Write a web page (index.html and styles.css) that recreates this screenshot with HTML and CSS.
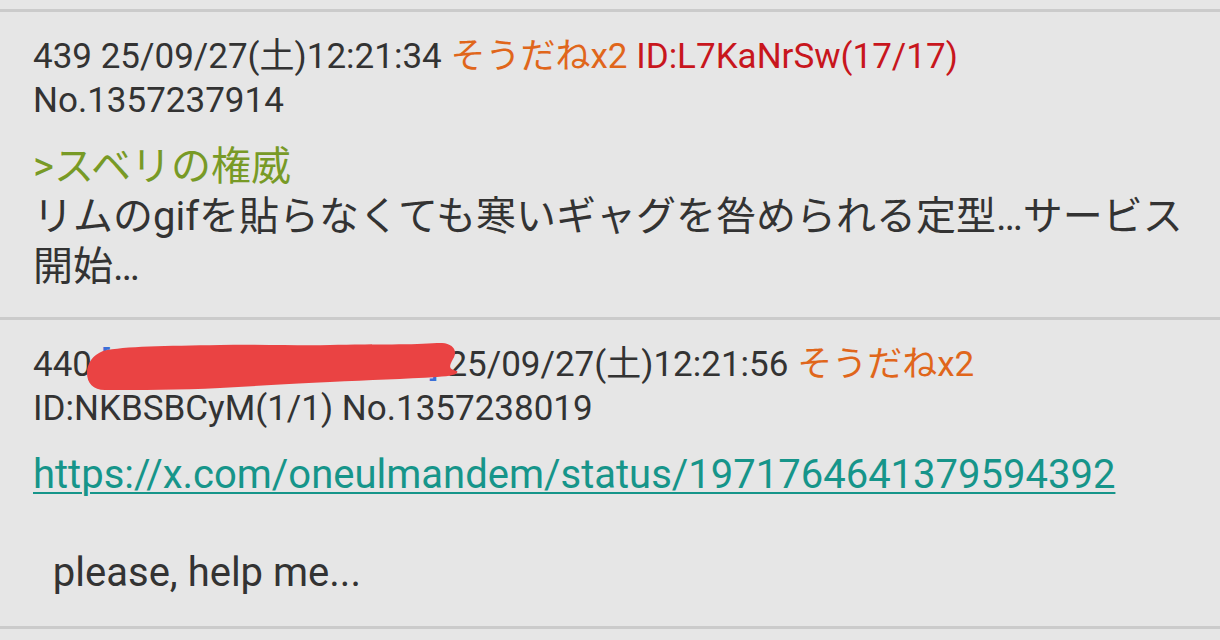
FILE: index.html
```html
<!DOCTYPE html>
<html lang="ja">
<head>
<meta charset="utf-8">
<title>スレッド</title>
<link rel="stylesheet" href="styles.css">
</head>
<body>
<div class="thread">
  <article class="post">
    <div class="head">439 25/09/27(土)12:21:34 <span class="sodane">そうだねx2</span> <span class="uid">ID:L7KaNrSw(17/17)</span> No.1357237914</div>
    <div class="body"><span class="quote">&gt;スベリの権威</span><br>リムのgifを貼らなくても寒いギャグを咎められる定型…サービス開始…</div>
  </article>
  <article class="post">
    <div class="head">440 <span class="name"><span>[</span><span>]</span></span> 25/09/27(土)12:21:56 <span class="sodane">そうだねx2</span> ID:NKBSBCyM(1/1) No.1357238019</div>
    <div class="body">
      <a class="link" href="#">https://x.com/oneulmandem/status/1971764641379594392</a>
      <p class="msg">&nbsp;&nbsp;please, help me...</p>
    </div>
    <svg class="scribble" width="374" height="50" viewBox="0 0 374 50" aria-hidden="true">
      <path d="M2 30 C2 20 8 12 18 8 C40 3 80 3 135 2 C180 1 215 3 245 2 C290 1 330 2 352 0 C366 -1 374 6 368 16 C365 22 362 26 372 28 C374 31 368 33 352 34 C320 36 285 37 245 39 C200 41 170 43 135 45 C95 47 55 47 20 47 C8 47 2 40 2 30 Z" fill="#ea4343"/>
    </svg>
  </article>
</div>
</body>
</html>
```
FILE: styles.css
```css
html, body {
  margin: 0;
  padding: 0;
  background: #e6e6e6;
}

body {
  font-family: Roboto, "Noto Sans CJK JP", sans-serif;
  color: #333333;
}

.thread {
  padding-top: 9px;
}

.post {
  position: relative;
  border-top: 3px solid #cbcbcb;
  padding: 23px 20px 25px 33px;
}

.post:last-child {
  border-bottom: 3px solid #cbcbcb;
  padding-bottom: 28px;
}

.head {
  font-size: 35px;
  line-height: 44px;
}

.sodane {
  color: #e0661b;
}

.uid {
  color: #c8161d;
}

.name {
  display: inline-flex;
  justify-content: space-between;
  width: 338px;
  color: #3b6fd8;
  vertical-align: baseline;
}

.body {
  margin-top: 19px;
  font-size: 40px;
  line-height: 50px;
}

.quote {
  color: #789a26;
}

.link {
  color: #16958a;
  text-decoration: underline;
  text-decoration-thickness: 2px;
  text-underline-offset: 4px;
}

.msg {
  margin: 48px 0 0;
}

.scribble {
  position: absolute;
  left: 85px;
  top: 23px;
}
```
